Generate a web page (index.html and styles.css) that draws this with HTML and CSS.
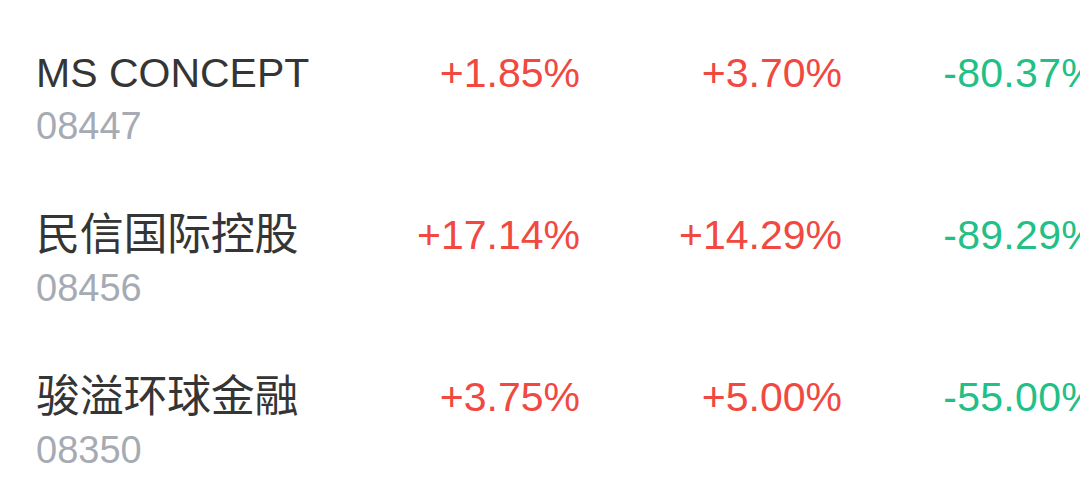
FILE: index.html
```html
<!DOCTYPE html>
<html lang="zh-CN">
<head>
<meta charset="utf-8">
<title>Stocks</title>
<link rel="stylesheet" href="styles.css">
</head>
<body>
<div class="list">
  <div class="row">
    <div class="cell-name">
      <div class="name">MS CONCEPT</div>
      <div class="code">08447</div>
    </div>
    <div class="pct up">+1.85%</div>
    <div class="pct up">+3.70%</div>
    <div class="pct down">-80.37%</div>
  </div>
  <div class="row">
    <div class="cell-name">
      <div class="name cjk">民信国际控股</div>
      <div class="code">08456</div>
    </div>
    <div class="pct up">+17.14%</div>
    <div class="pct up">+14.29%</div>
    <div class="pct down">-89.29%</div>
  </div>
  <div class="row">
    <div class="cell-name">
      <div class="name cjk">骏溢环球金融</div>
      <div class="code">08350</div>
    </div>
    <div class="pct up">+3.75%</div>
    <div class="pct up">+5.00%</div>
    <div class="pct down">-55.00%</div>
  </div>
</div>
</body>
</html>
```

FILE: styles.css
```css
html, body {
  margin: 0;
  padding: 0;
  background: #ffffff;
  overflow: hidden;
}

body {
  width: 1080px;
  height: 490px;
  font-family: "Liberation Sans", "Noto Sans CJK SC", sans-serif;
}

.list {
  display: flex;
  flex-direction: column;
}

.row {
  display: grid;
  grid-template-columns: 380px 200px 262px 256px;
  height: 162px;
  box-sizing: border-box;
  padding-top: 48px;
}

.cell-name {
  padding-left: 36px;
}

.name {
  font-size: 41px;
  line-height: 50px;
  color: #353535;
  white-space: nowrap;
}

.name.cjk {
  font-size: 44px;
  letter-spacing: -0.3px;
}

.code {
  font-size: 38px;
  line-height: 56px;
  color: #a6abb3;
}

.pct {
  font-size: 41px;
  line-height: 50px;
  text-align: right;
  white-space: nowrap;
}

.down {
  letter-spacing: 0.3px;
}

.up {
  color: #f1483f;
}

.down {
  color: #22bf86;
}
```
